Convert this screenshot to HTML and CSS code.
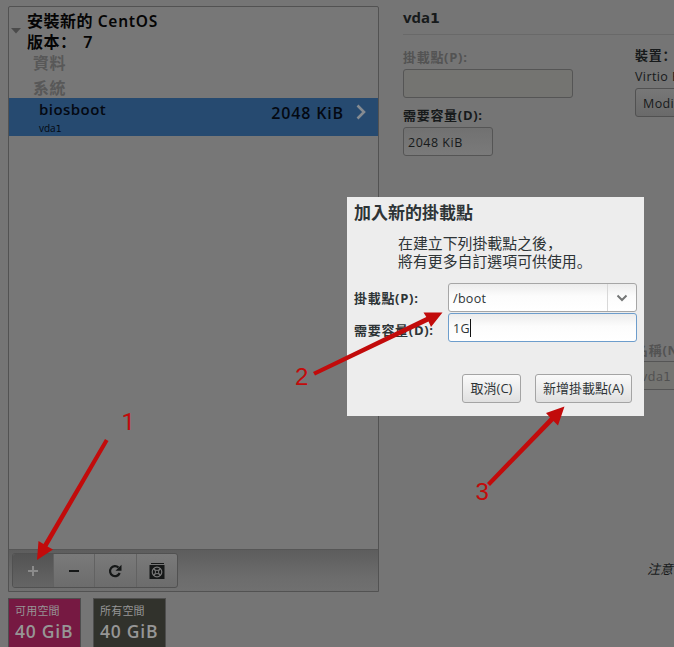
FILE: index.html
```
<!DOCTYPE html>
<html lang="zh-Hant">
<head>
<meta charset="utf-8">
<title>CentOS 7 手動磁碟分割</title>
<link rel="stylesheet" href="styles.css">
</head>
<body>
<div class="screen">
  <main class="page">
    <section class="left">
      <div class="panel">
        <div class="tree">
          <div class="tree-head">
            <svg class="expander" width="10" height="6" viewBox="0 0 10 6"><path d="M0 0H10L5 5.5Z" fill="#4b4b4b"/></svg>
            <h2 class="tree-title">安裝新的 <span class="product">CentOS</span><br>版本<span class="punct" lang="zh-Hans">：</span> <span class="version">7</span></h2>
          </div>
          <div class="group">資料</div>
          <div class="group">系統</div>
          <div class="row">
            <div class="row-name"><b>biosboot</b><small>vda<span class="one">1</span></small></div>
            <span class="row-size">2048 KiB</span>
            <svg class="chevron" width="10" height="16" viewBox="0 0 10 16"><path d="M1.5 1.5L8 8L1.5 14.5" fill="none" stroke="#858b91" stroke-width="2.6"/></svg>
          </div>
        </div>
        <div class="toolbar">
          <div class="tools">
            <span class="tool pressed"><svg width="12" height="12" viewBox="0 0 12 12"><path d="M6 1V11M1 6H11" stroke="#8b8b8b" stroke-width="2"/></svg></span>
            <span class="tool"><svg width="12" height="12" viewBox="0 0 12 12"><path d="M1 6H11" stroke="#151717" stroke-width="2"/></svg></span>
            <span class="tool"><svg width="14" height="14" viewBox="0 0 14 14"><path d="M10.500 3.500A5 5 0 1 0 11.700 9" fill="none" stroke="#151717" stroke-width="2.2"/><path d="M13.500 .7V6.700H7.500Z" fill="#151717"/></svg></span>
            <span class="tool"><svg width="16" height="16" viewBox="0 0 16 16"><path d="M2 0H15V1H2ZM.5 2H15.500V16H.5Z" fill="#151717"/><circle cx="8" cy="9" r="4.800" fill="none" stroke="#777" stroke-width="1.2"/><circle cx="8" cy="9" r="1.800" fill="none" stroke="#777"/><path d="M4.500 5.500L6.700 7.700M11.500 5.500L9.300 7.700M4.500 12.500L6.700 10.300M11.500 12.500L9.300 10.300" stroke="#777" stroke-width="1.5"/></svg></span>
          </div>
        </div>
      </div>
      <div class="spaces">
        <div class="space free"><span>可用空間</span><b>40 GiB</b></div>
        <div class="space total"><span>所有空間</span><b>40 GiB</b></div>
      </div>
    </section>
    <section class="right">
      <h1 class="heading">vda<span class="one">1</span></h1>
      <div class="details">
        <div class="fields">
          <label class="label muted">掛載點(P):</label>
          <div class="entry disabled wide"></div>
          <label class="label">需要容量(D):</label>
          <div class="entry narrow">2048 KiB</div>
        </div>
        <div class="device">
          <span class="label">裝置<span class="punct" lang="zh-Hans">：</span></span>
          <span class="device-name">Virtio Block Device</span>
          <span class="modify">Modify...</span>
        </div>
      </div>
      <div class="name-block">
        <label class="label muted">名稱(N):</label>
        <div class="entry disabled name-entry">vda<span class="one">1</span></div>
      </div>
      <p class="note">注意：</p>
    </section>
  </main>

  <div class="dialog">
    <h2 class="dialog-title">加入新的掛載點</h2>
    <p class="dialog-text">在建立下列掛載點之後<span class="punct" lang="zh-Hans">，</span><br>將有更多自訂選項可供使用<span class="punct" lang="zh-Hans">。</span></p>
    <div class="form">
      <label class="label">掛載點(P):</label>
      <div class="input combo"><span>/boot</span><i class="arrow"><svg width="12" height="8" viewBox="0 0 12 8"><path d="M1.500 1.500L6 6L10.500 1.500" fill="none" stroke="#747676" stroke-width="2"/></svg></i></div>
      <label class="label size-label">需要容量(D):</label>
      <div class="input focus"><span>1G</span><i class="caret"></i></div>
    </div>
    <div class="actions">
      <button class="button cancel">取消(C)</button>
      <button class="button add">新增掛載點(A)</button>
    </div>
  </div>

  <svg class="marks" width="674" height="647" viewBox="0 0 674 647">
    <g fill="#c20b0b" stroke="none">
      <path d="M37 560L38.500 541L43.500 544L105 439L108.500 441L47.500 546.500L53 549.500Z"/>
      <path d="M442.500 312.500L423.500 312.500L426.300 317L313 372L315 375.500L428.500 321.500L431 327Z"/>
      <path d="M564.500 406.500L546 413L550 417.500L487 483L490 486L553.500 421L558 425.500Z"/>
    </g>
    <g class="numbers"><text class="first" x="121.500" y="429.500">1</text><text x="295" y="385">2</text><text x="475.500" y="499.500">3</text></g>
  </svg>
</div>
</body>
</html>
```
FILE: styles.css
```
* { box-sizing: border-box; }
body {
  margin: 0;
  font-family: "Open Sans", "Noto Sans CJK TC", sans-serif;
  font-size: 13px;
  color: #171a1b;
  background: #757575;
}
h1, h2, p { margin: 0; }
.punct { font-family: "Noto Sans CJK SC", sans-serif; }
.one { font-family: "DejaVu Sans", sans-serif; font-size: .94em; line-height: 1; }
.screen { position: relative; width: 674px; height: 647px; overflow: hidden; }
.page { display: flex; height: 100%; padding: 6px 0 0 8px; }

.left { flex: none; width: 371px; }
.panel { display: flex; flex-direction: column; height: 586px; border: 1px solid #525252; border-radius: 2px 2px 0 0; background: #777; }
.tree { flex: 1; }
.tree-head { display: flex; height: 44px; padding: 4px 0 0 2px; }
.expander { flex: none; margin-top: 17px; }
.tree-title { margin-left: 6px; font-family: "Noto Sans", "Noto Sans CJK TC", sans-serif; font-size: 16px; line-height: 20px; font-weight: 600; letter-spacing: .5px; color: #050505; white-space: nowrap; }
.product { font-size: 15.500px; letter-spacing: .75px; }
.version { margin-left: 2px; }
.group { height: 25px; padding-left: 24px; font-size: 16px; line-height: 25px; font-weight: 700; letter-spacing: .5px; color: #585858; }
.row { display: flex; height: 38px; margin-top: -3px; padding: 0 12px 0 30px; background: #264a70; color: #040912; }
.row-name { flex: 1; }
.row-name b { display: block; font-size: 15px; line-height: 22px; height: 22px; font-weight: 600; letter-spacing: .45px; }
.row-name small { display: block; font-size: 10px; line-height: 16px; }
.row-size { font-size: 16px; line-height: 30px; font-weight: 600; letter-spacing: .85px; }
.chevron { margin: 6px 0 0 12px; }
.toolbar { height: 42px; padding: 3px; border-top: 1px solid #565656; background: linear-gradient(#5d5d5d, #6c6c6c 65%, #707070); }
.tools { display: flex; width: 166px; height: 35px; border: 1px solid #515151; border-radius: 3px; background: linear-gradient(#7a7a7a, #6c6c6c); overflow: hidden; }
.tool { flex: 1; display: flex; align-items: center; justify-content: center; border-left: 1px solid #626262; }
.tool.pressed { flex: none; width: 40px; border: 0; background: linear-gradient(#535353, #656565); }
.spaces { display: flex; gap: 12px; margin-top: 6px; }
.space { width: 73px; height: 60px; padding: 2px 6px; border: 1px solid #4e4e4e; color: #969696; white-space: nowrap; }
.space span { display: block; font-size: 11px; line-height: 19px; letter-spacing: .2px; }
.space b { display: block; font-size: 17.500px; line-height: 23px; font-weight: 600; letter-spacing: .75px; }
.free { background: #761942; }
.total { background: #31322c; }

.right { flex: none; width: 300px; margin-left: 24px; }
.heading { height: 29px; padding-top: 1px; font-size: 15px; line-height: 21px; border-bottom: 1px solid #696969; font-weight: 700; }
.details { display: flex; height: 297px; padding-top: 13px; }
.fields { flex: none; width: 232px; }
.label { display: block; font-size: 13px; line-height: 18px; height: 18px; font-weight: 700; letter-spacing: .7px; white-space: nowrap; }
.muted { color: #535353; }
.entry { height: 29px; padding: 0 4px; border: 1px solid #555; border-radius: 3px; background: linear-gradient(#717171, #7a7a7a); line-height: 29px; font-size: 12.500px; letter-spacing: .5px; }
.disabled { background: #747471; color: #505050; }
.fields .entry { margin-top: 3px; }
.wide { width: 170px; margin-bottom: 8px; }
.narrow { width: 90px; }
.device { flex: none; width: 140px; margin-top: -2px; }
.device-name { display: block; margin-top: 4px; font-size: 12.500px; line-height: 18px; letter-spacing: .4px; }
.modify { display: block; width: 80px; height: 29px; margin-top: 2px; padding-left: 7px; border: 1px solid #515151; border-radius: 3px; background: linear-gradient(#777, #6a6a6a); font-size: 12.500px; line-height: 29px; letter-spacing: .4px; }
.name-block { margin-left: 232px; padding-top: 9px; }
.name-entry { width: 100px; margin-top: 2px; padding-left: 5px; }
.note { margin: 169px 0 0 244px; font-size: 13px; line-height: 20px; font-style: italic; }

.dialog { position: absolute; left: 347px; top: 197px; width: 297px; height: 219px; padding: 4px 7px; background: #ededed; color: #2e3436; }
.dialog-title { font-size: 17px; line-height: 23px; font-weight: 700; }
.dialog-text { margin: 10px 0 0 44px; font-size: 14.900px; line-height: 18px; white-space: nowrap; }
.form { display: grid; grid-template-columns: 94px 189px; grid-template-rows: 29px 29px; row-gap: 1px; margin-top: 13px; }
.form .label { margin-top: 6px; }
.form .size-label { margin-top: 8px; }
.input { display: flex; padding-left: 4px; border: 1px solid #a6a6a6; border-radius: 3px; background: linear-gradient(#ececec, #fcfcfc 45%, #fff); line-height: 29px; font-size: 12.500px; letter-spacing: .3px; }
.arrow { display: flex; align-items: center; justify-content: center; width: 29px; margin-left: auto; border-left: 1px solid #d8d8d8; }
.focus { border-color: #6d9dcc; }
.caret { width: 1px; height: 18px; margin-top: 5px; background: #111; }
.actions { display: flex; justify-content: flex-end; gap: 14px; margin: 32px 5px 0 0; }
.button { height: 29px; padding: 0; border: 1px solid #a4a4a4; border-radius: 3px; background: linear-gradient(#fafafa, #e0e0e0); color: #2e3436; font: 13px/27px "Open Sans", "Noto Sans CJK TC", sans-serif; white-space: nowrap; }
.cancel { width: 59px; }
.add { width: 97px; }

.marks { position: absolute; left: 0; top: 0; pointer-events: none; }
.numbers { fill: #c20b0b; font-family: "Liberation Sans", sans-serif; font-size: 24px; }
.first { font-family: Roboto, sans-serif; }
```
